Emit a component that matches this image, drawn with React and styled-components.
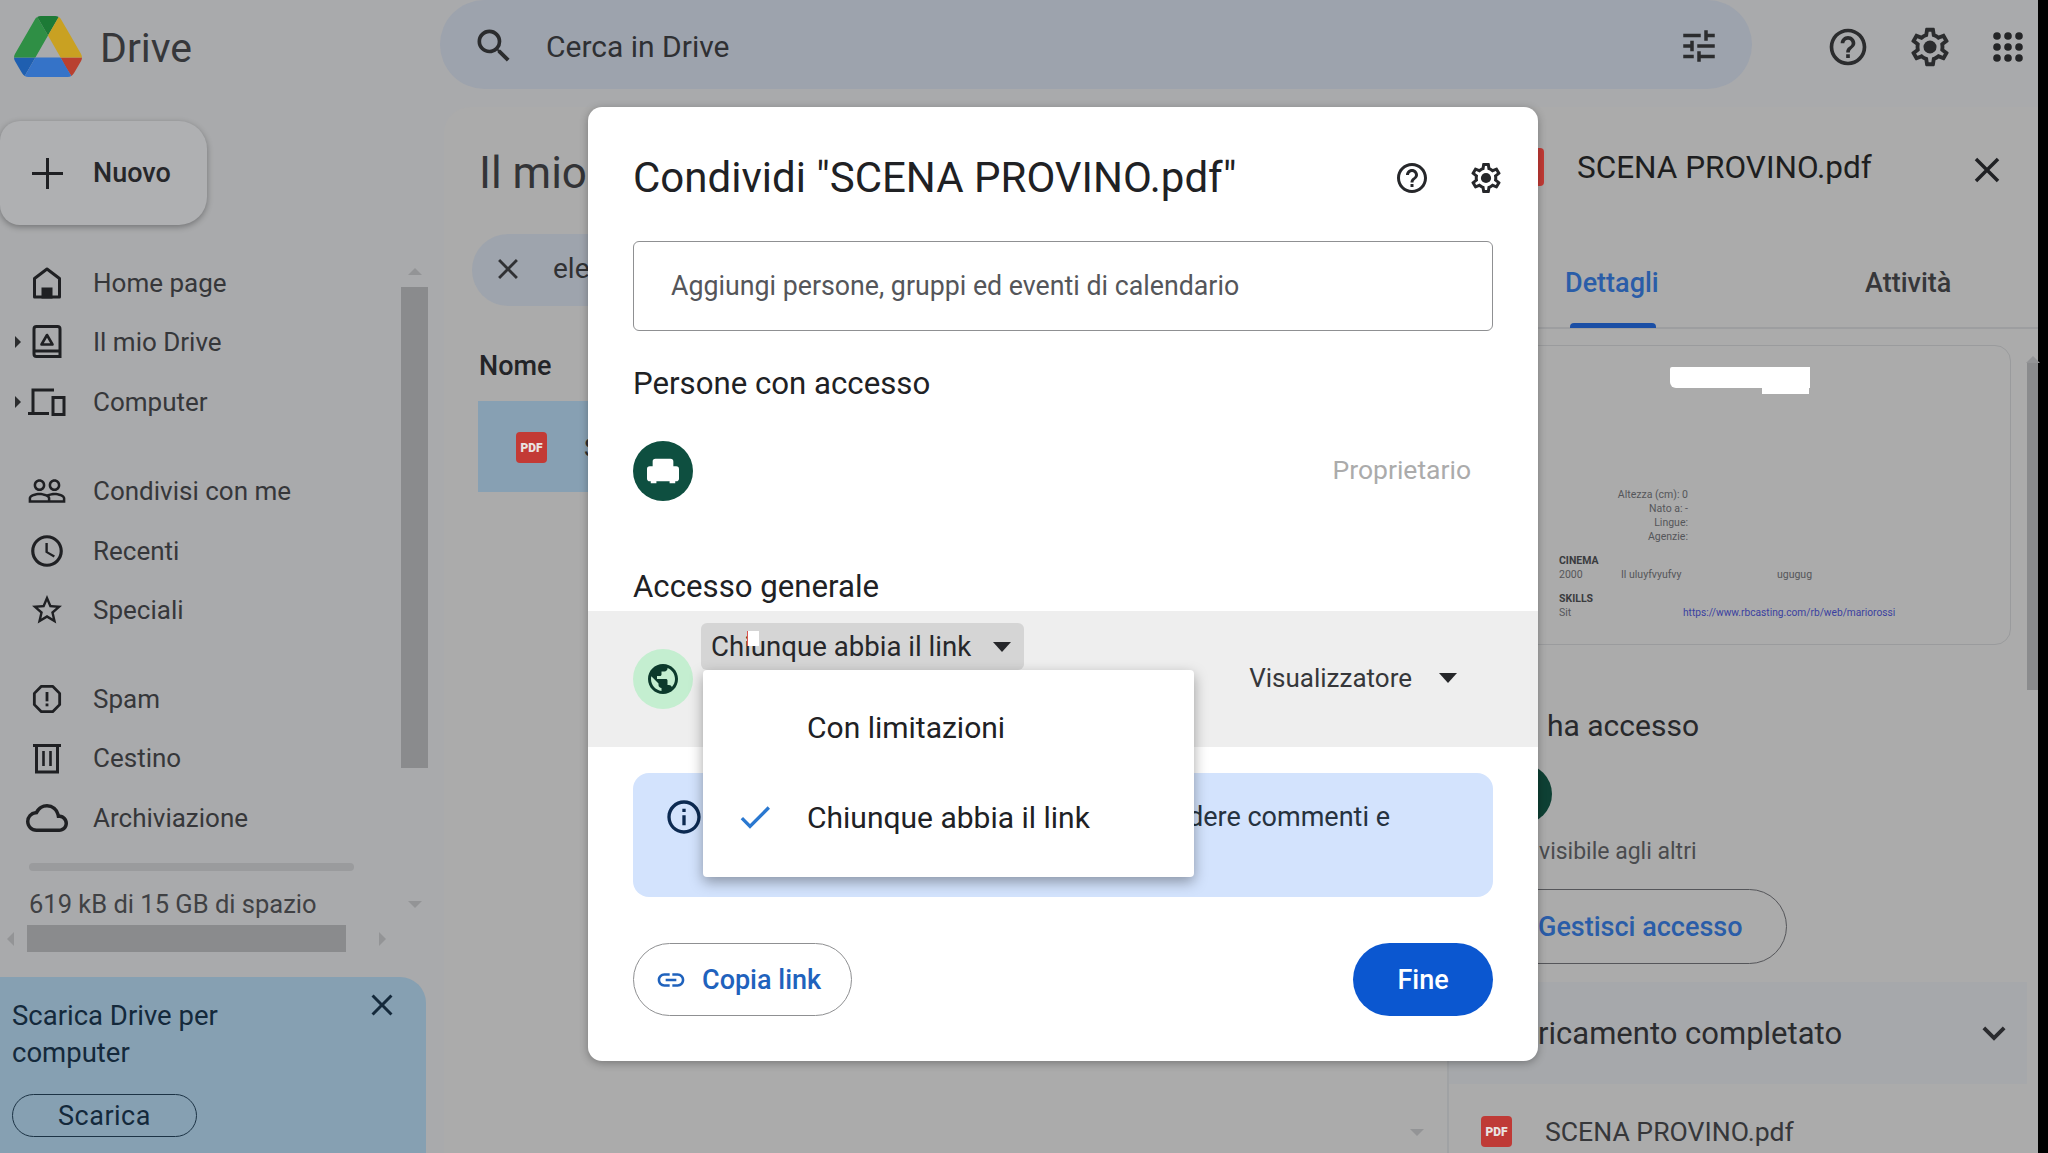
import React from 'react'
import styled, { createGlobalStyle } from 'styled-components'
import {
  MdSearch, MdTune, MdHelpOutline, MdClose, MdPeopleOutline, MdAccessTime, MdStarBorder,
  MdOutlineCloud, MdPublic, MdInfoOutline, MdCheck, MdLink, MdKeyboardArrowDown,
} from 'react-icons/md'

const GlobalStyle = createGlobalStyle`
  html, body { margin: 0; padding: 0; background: #000; }
  body { font-family: Roboto, "Liberation Sans", sans-serif; color: #2b2c2e; }
  * { box-sizing: border-box; }
`

const Page = styled.div`
  position: relative;
  width: 2048px;
  height: 1153px;
  overflow: hidden;
  background: #000;
`
const Shell = styled.div`
  width: 2038px;
  height: 1153px;
  background: #a9aaac;
  display: flex;
  flex-direction: column;
`

/* top bar */
const TopBar = styled.header`
  height: 94px;
  display: flex;
  align-items: flex-start;
`
const Brand = styled.div`
  width: 440px;
  height: 94px;
  padding: 16px 0 0 14px;
  display: flex;
  align-items: flex-start;
  gap: 18px;
`
const BrandName = styled.span`
  font-size: 41px;
  line-height: 60px;
  margin-top: 2px;
  color: #36373a;
`
const SearchBar = styled.div`
  width: 1312px;
  height: 89px;
  border-radius: 45px;
  background: #9da3ad;
  display: flex;
  align-items: center;
  padding: 3px 32px 0 32px;
`
const SearchText = styled.span`
  font-size: 30px;
  color: #2f3033;
  margin-left: 30px;
  flex: 1;
`
const TopActions = styled.div`
  display: flex;
  align-items: center;
  height: 93px;
  margin-left: 73px;
  color: #2b2c2e;
`
const TopIcon = styled.div`
  width: 46px;
  height: 46px;
  display: flex;
  align-items: center;
  justify-content: center;
  margin-left: ${p => p.$gap || 0}px;
`

/* body */
const Body = styled.div`
  flex: 1;
  display: flex;
  min-height: 0;
`
const Sidebar = styled.aside`
  width: 444px;
  display: flex;
  flex-direction: column;
`
const NewButton = styled.div`
  margin-top: 27px;
  flex: none;
  width: 207px;
  height: 104px;
  border-radius: 20px 28px 28px 20px;
  background: #afb0b2;
  box-shadow: 0 2px 6px rgba(0, 0, 0, 0.32);
  display: flex;
  align-items: center;
  padding-left: 31px;
  gap: 29px;
  font-size: 27px;
  font-weight: 500;
  color: #26272a;
`
const NavArea = styled.div`
  margin-top: 28px;
  display: flex;
  height: 672px;
  flex: none;
`
const NavColumn = styled.div`
  width: 401px;
  display: flex;
  flex-direction: column;
`
const NavGroup = styled.div`
  flex: none;
  margin-bottom: ${p => p.$gap || 0}px;
`
const NavItem = styled.div`
  position: relative;
  height: 59.5px;
  display: flex;
  align-items: center;
  font-size: 26px;
  color: #36373a;
`
const NavCaret = styled.span`
  position: absolute;
  left: 15px;
  width: 0;
  height: 0;
  border-top: 6px solid transparent;
  border-bottom: 6px solid transparent;
  border-left: 6px solid #2b2c2e;
`
const NavIconSlot = styled.span`
  width: 48px;
  margin-left: 23px;
  margin-right: 22px;
  height: 40px;
  display: flex;
  align-items: center;
  justify-content: center;
  flex: none;
  color: #1f2023;
`
const StorageBar = styled.div`
  flex: none;
  margin: 15px 0 0 29px;
  width: 325px;
  height: 8px;
  border-radius: 4px;
  background: #9a9b9d;
`
const StorageText = styled.div`
  flex: none;
  margin: 15px 0 0 29px;
  font-size: 25.5px;
  line-height: 36px;
  color: #404144;
  white-space: nowrap;
`
const ScrollColumn = styled.div`
  width: 27px;
  display: flex;
  flex-direction: column;
  align-items: center;
`
const ArrowUp = styled.span`
  width: 0;
  height: 0;
  flex: none;
  border-left: 7px solid transparent;
  border-right: 7px solid transparent;
  border-bottom: 7px solid #939496;
  margin: ${p => p.$margin || 0};
`
const ArrowDown = styled.span`
  width: 0;
  height: 0;
  flex: none;
  border-left: 7px solid transparent;
  border-right: 7px solid transparent;
  border-top: 7px solid #939496;
  margin: ${p => p.$margin || 0};
`
const ScrollThumb = styled.div`
  width: 100%;
  height: ${p => p.$h}px;
  flex: none;
  background: #8a8b8d;
`
const HScrollRow = styled.div`
  height: 27px;
  flex: none;
  display: flex;
  align-items: center;
  padding-left: 7px;
`
const ArrowLeft = styled.span`
  width: 0;
  height: 0;
  border-top: 7px solid transparent;
  border-bottom: 7px solid transparent;
  border-right: 7px solid #939496;
  margin-right: 13px;
`
const ArrowRight = styled.span`
  width: 0;
  height: 0;
  border-top: 7px solid transparent;
  border-bottom: 7px solid transparent;
  border-left: 7px solid #939496;
  margin-left: 33px;
`
const HThumb = styled.div`
  width: 319px;
  height: 27px;
  background: #8a8b8d;
`
const Promo = styled.div`
  position: relative;
  margin-top: 25px;
  width: 426px;
  flex: 1;
  border-top-right-radius: 26px;
  background: #86a0b2;
  padding: 20px 12px 0;
  color: #14293b;
`
const PromoText = styled.div`
  font-size: 27.5px;
  line-height: 37px;
  width: 270px;
`
const PromoClose = styled.span`
  position: absolute;
  right: 26px;
  top: 10px;
  display: flex;
`
const PromoButton = styled.div`
  margin-top: 23px;
  width: 185px;
  height: 43px;
  border: 1.5px solid #1c3345;
  border-radius: 22px;
  display: flex;
  align-items: center;
  justify-content: center;
  font-size: 27px;
  letter-spacing: 0.5px;
`

/* drive content */
const Content = styled.div`
  flex: 1;
  margin-top: 13px;
  display: flex;
  background: #ababab;
  border-top-left-radius: 26px;
`
const Main = styled.main`
  position: relative;
  width: 1003px;
  padding-left: 35px;
`
const MainTitle = styled.h1`
  margin: 36px 0 0;
  font-size: 44px;
  line-height: 60px;
  font-weight: 400;
  color: #333437;
`
const FilterChip = styled.div`
  margin: 31px 0 0 -7px;
  height: 72px;
  border-radius: 36px 0 0 36px;
  background: #9ea4ad;
  display: flex;
  align-items: center;
  padding: 0 0 3px 19px;
  gap: 28px;
  font-size: 28px;
  color: #303134;
`
const ColumnLabel = styled.div`
  margin-top: 42px;
  font-size: 27px;
  line-height: 36px;
  font-weight: 500;
  color: #232427;
`
const FileRow = styled.div`
  margin: 17px 0 0 -1px;
  height: 91px;
  background: #87a0b3;
  display: flex;
  align-items: center;
  padding: 2px 0 0 38px;
  gap: 37px;
  font-size: 26px;
`
const PdfIcon = styled.span`
  width: ${p => p.$size || 31}px;
  height: ${p => p.$size || 31}px;
  flex: none;
  border-radius: 4px;
  background: ${p => p.$bg || '#c33a35'};
  color: #e9e2e1;
  font-size: 12px;
  font-weight: 900;
  display: flex;
  align-items: center;
  justify-content: center;
`
const MainArrow = styled.span`
  position: absolute;
  right: 23px;
  bottom: 17px;
  display: flex;
`

/* details panel */
const Panel = styled.section`
  width: 591px;
  position: relative;
  display: flex;
  flex-direction: column;
  border-left: 2px solid #a0a2a4;
`
const PanelHeader = styled.div`
  height: 120px;
  flex: none;
  display: flex;
  align-items: center;
  padding: 0 30px 0 57px;
  gap: 33px;
  font-size: 31.5px;
  font-weight: 400;
  color: #1d1e20;
`
const PanelClose = styled.span`
  margin: 5px 0 0 auto;
  display: flex;
  color: #202124;
`
const Tabs = styled.div`
  height: 102px;
  flex: none;
  border-bottom: 2px solid #9d9ea0;
  display: grid;
  grid-template-columns: 300px auto;
  padding-left: 116px;
`
const Tab = styled.div`
  position: relative;
  padding-top: 40px;
  font-size: 27px;
  font-weight: 500;
  color: ${p => (p.$active ? '#2a5da8' : '#36373a')};
  white-space: nowrap;
`
const TabLine = styled.span`
  position: absolute;
  left: 5px;
  bottom: -1px;
  width: 86px;
  height: 5px;
  border-radius: 4px 4px 0 0;
  background: #1b4fa5;
`
const PanelBody = styled.div`
  flex: 1;
  display: flex;
  min-height: 0;
`
const PanelMain = styled.div`
  flex: 1;
  min-width: 0;
`
const PanelScroll = styled.div`
  width: 11px;
  display: flex;
  flex-direction: column;
  align-items: center;
  padding-top: 27px;
`
const Preview = styled.div`
  position: relative;
  margin: 16px 0 0 22px;
  width: 540px;
  height: 300px;
  border: 1.5px solid #9a9b9d;
  border-radius: 16px;
  padding: 142px 0 0 87px;
  font-size: 10.5px;
  line-height: 14px;
  color: #55565a;
`
const Redacted = styled.div`
  position: absolute;
  left: 198px;
  top: 21px;
  width: 140px;
  height: 21px;
  background: #fff;
  border-radius: 2px 0 0 6px;
  &::after {
    content: '';
    position: absolute;
    right: 1px;
    top: 21px;
    width: 47px;
    height: 6px;
    background: #fff;
  }
`
const DocBio = styled.div`
  margin-left: 53px;
  width: 76px;
  text-align: right;
  white-space: nowrap;
`
const DocHead = styled.div`
  margin-top: ${p => p.$top || 0}px;
  font-weight: 700;
  color: #3a3b3e;
`
const DocRow = styled.div`
  display: grid;
  grid-template-columns: ${p => p.$cols};
  white-space: nowrap;
`
const DocLink = styled.span`
  color: #3a3fa0;
  font-size: 10.2px;
`
const AccessTitle = styled.div`
  margin: 63px 0 0 98px;
  font-size: 30px;
  line-height: 36px;
  color: #28292c;
`
const OwnerDot = styled.div`
  margin: 20px 0 0 43px;
  width: 60px;
  height: 60px;
  border-radius: 50%;
  background: #0e4034;
`
const AccessNote = styled.div`
  margin: 11px 0 0 90px;
  font-size: 23px;
  line-height: 34px;
  color: #4a4b4e;
`
const ManageButton = styled.div`
  margin: 20px 0 0 0;
  width: 338px;
  height: 75px;
  border: 1.5px solid #55565a;
  border-radius: 38px;
  display: flex;
  align-items: center;
  padding-left: 88px;
  font-size: 27px;
  font-weight: 500;
  color: #2a5da8;
`
const UploadHead = styled.div`
  margin-top: 18px;
  height: 102px;
  background: #a6a8ab;
  display: flex;
  align-items: center;
  justify-content: space-between;
  padding: 0 10px 0 89px;
  font-size: 31px;
  color: #2a2b2e;
`
const UploadRow = styled.div`
  height: 95px;
  display: flex;
  align-items: center;
  padding-left: 32px;
  gap: 33px;
  font-size: 26.6px;
  color: #36373a;
`

/* share dialog */
const Dialog = styled.div`
  position: absolute;
  left: 588px;
  top: 107px;
  width: 950px;
  height: 954px;
  background: #fff;
  border-radius: 14px;
  box-shadow: 0 2px 8px rgba(0, 0, 0, 0.3);
  padding: 0 45px;
  display: flex;
  flex-direction: column;
`
const DialogHeader = styled.div`
  height: 134px;
  flex: none;
  padding-top: 41px;
  display: flex;
  align-items: flex-start;
  justify-content: space-between;
`
const DialogTitle = styled.h2`
  margin: 0;
  font-size: 42px;
  line-height: 60px;
  font-weight: 400;
  color: #202124;
  white-space: nowrap;
`
const HeaderIcons = styled.div`
  display: flex;
  align-items: center;
  gap: 38px;
  height: 60px;
  margin-right: -11px;
  color: #26272a;
`
const PeopleInput = styled.div`
  height: 90px;
  flex: none;
  border: 1.5px solid #8f9092;
  border-radius: 6px;
  padding-left: 37px;
  display: flex;
  align-items: center;
  font-size: 26.75px;
  color: #55565a;
`
const SectionTitle = styled.div`
  margin-top: ${p => p.$top}px;
  flex: none;
  height: 36px;
  padding-top: 1px;
  font-size: 31.2px;
  line-height: 36px;
  color: #202124;
`
const OwnerRow = styled.div`
  margin-top: 40px;
  height: 60px;
  flex: none;
  display: flex;
  align-items: center;
  justify-content: space-between;
  padding-right: 22px;
`
const OwnerRole = styled.span`
  margin-bottom: 3px;
  font-size: 26.5px;
  color: #ababab;
`
const Avatar = styled.div`
  width: 60px;
  height: 60px;
  border-radius: 50%;
  background: ${p => p.$bg};
  color: ${p => p.$fg || '#fff'};
  display: flex;
  align-items: center;
  justify-content: center;
  flex: none;
`
const GeneralRow = styled.div`
  position: relative;
  margin: 7px -45px 0;
  padding: 0 0 0 45px;
  height: 136px;
  flex: none;
  background: #eeeeee;
  display: flex;
  align-items: center;
`
const AccessPicker = styled.div`
  position: relative;
  align-self: flex-start;
  margin: 12px 0 0 8px;
  width: 323px;
  height: 47px;
  border-radius: 6px;
  background: #d5d5d5;
  display: flex;
  align-items: center;
  padding-left: 10px;
  font-size: 27.6px;
  color: #26272a;
`
const TextSmudge = styled.span`
  position: absolute;
  left: 46px;
  top: 8px;
  width: 12px;
  height: 15px;
  background: #fff;
  border-left: 1px solid #d9534f;
`
const Caret = styled.span`
  width: 0;
  height: 0;
  border-left: 9px solid transparent;
  border-right: 9px solid transparent;
  border-top: 10px solid #26272a;
  margin-left: ${p => p.$left}px;
`
const RoleSelect = styled.div`
  margin-left: auto;
  padding: 0 81px 2px 0;
  display: flex;
  align-items: center;
  font-size: 26px;
  color: #36373a;
`
const AccessMenu = styled.div`
  position: absolute;
  left: 115px;
  top: 59px;
  width: 491px;
  height: 207px;
  padding-top: 12px;
  background: #fff;
  border-radius: 4px;
  box-shadow: 0 5px 14px rgba(0, 0, 0, 0.35);
  z-index: 2;
`
const MenuItem = styled.div`
  height: 90px;
  display: flex;
  align-items: center;
  font-size: 30px;
  color: #202124;
`
const MenuCheck = styled.span`
  width: 104px;
  display: flex;
  justify-content: center;
  color: #2a78d0;
`
const InfoBox = styled.div`
  margin-top: 26px;
  height: 124px;
  flex: none;
  border-radius: 16px;
  background: #d3e3fd;
  padding: 22px 103px 0 31px;
  display: flex;
  font-size: 27px;
  line-height: 44px;
  color: #26323f;
  white-space: nowrap;
`
const InfoText = styled.span`
  flex: 1;
  text-align: right;
`
const InfoIcon = styled.span`
  color: #0c2a52;
  display: flex;
  height: 44px;
  align-items: center;
`
const Footer = styled.div`
  margin-top: 46px;
  display: flex;
  justify-content: space-between;
`
const CopyButton = styled.div`
  width: 219px;
  height: 73px;
  border: 1.5px solid #8f9092;
  border-radius: 37px;
  padding-left: 21px;
  display: flex;
  align-items: center;
  gap: 15px;
  font-size: 27px;
  font-weight: 500;
  color: #1f62bd;
`
const DoneButton = styled.div`
  width: 140px;
  height: 73px;
  border-radius: 37px;
  background: #0b57d0;
  color: #fff;
  display: flex;
  align-items: center;
  justify-content: center;
  font-size: 27px;
  font-weight: 500;
`

function DriveLogo() {
  return (
    <svg width="68" height="61" viewBox="0 0 87.3 78">
      <path d="m6.6 66.85 3.85 6.65c.8 1.4 1.95 2.5 3.3 3.3l13.75-23.8h-27.5c0 1.55.4 3.1 1.2 4.5z" fill="#1f5fb0" />
      <path d="m43.65 25-13.75-23.8c-1.35.8-2.5 1.9-3.3 3.3l-25.4 44a9.06 9.06 0 0 0 -1.2 4.5h27.5z" fill="#2f8f45" />
      <path d="m73.55 76.8c1.35-.8 2.5-1.9 3.3-3.3l1.6-2.75 7.65-13.25c.8-1.4 1.2-2.95 1.2-4.5h-27.502l5.852 11.5z" fill="#b9402f" />
      <path d="m43.65 25 13.75-23.8c-1.35-.8-2.9-1.2-4.5-1.2h-18.5c-1.6 0-3.15.45-4.5 1.2z" fill="#1d7a36" />
      <path d="m59.8 53h-32.3l-13.75 23.8c1.35.8 2.9 1.2 4.5 1.2h50.8c1.6 0 3.15-.45 4.5-1.2z" fill="#3573c8" />
      <path d="m73.4 26.5-12.7-22c-.8-1.4-1.95-2.5-3.3-3.3l-13.75 23.8 16.15 28h27.45c0-1.55-.4-3.1-1.2-4.5z" fill="#c9a122" />
    </svg>
  )
}

function GearIcon({ size }) {
  return (
    <svg width={size} height={size} viewBox="0 0 24 24" fill="currentColor">
      <path d="M19.43 12.98c.04-.32.07-.64.07-.98 0-.34-.03-.66-.07-.98l2.11-1.65c.19-.15.24-.42.12-.64l-2-3.46c-.09-.16-.26-.25-.44-.25-.06 0-.12.01-.17.03l-2.49 1c-.52-.4-1.08-.73-1.69-.98l-.38-2.65C14.46 2.18 14.25 2 14 2h-4c-.25 0-.46.18-.49.42l-.38 2.65c-.61.25-1.17.59-1.69.98l-2.49-1c-.06-.02-.12-.03-.18-.03-.17 0-.34.09-.43.25l-2 3.46c-.13.22-.07.49.12.64l2.11 1.65c-.04.32-.07.65-.07.98 0 .33.03.66.07.98l-2.11 1.65c-.19.15-.24.42-.12.64l2 3.46c.09.16.26.25.44.25.06 0 .12-.01.17-.03l2.49-1c.52.4 1.08.73 1.69.98l.38 2.65c.03.24.24.42.49.42h4c.25 0 .46-.18.49-.42l.38-2.65c.61-.25 1.17-.59 1.69-.98l2.49 1c.06.02.12.03.18.03.17 0 .34-.09.43-.25l2-3.46c.12-.22.07-.49-.12-.64l-2.11-1.65zm-1.98-1.71c.04.31.05.52.05.73 0 .21-.02.43-.05.73l-.14 1.13.89.7 1.08.84-.7 1.21-1.27-.51-1.04-.42-.9.68c-.43.32-.84.56-1.25.73l-1.06.43-.16 1.13-.2 1.35h-1.4l-.19-1.35-.16-1.13-1.06-.43c-.43-.18-.83-.41-1.23-.71l-.91-.7-1.06.43-1.27.51-.7-1.21 1.08-.84.89-.7-.14-1.13c-.03-.31-.05-.54-.05-.74s.02-.43.05-.73l.14-1.13-.89-.7-1.08-.84.7-1.21 1.27.51 1.04.42.9-.68c.43-.32.84-.56 1.25-.73l1.06-.43.16-1.13.2-1.35h1.39l.19 1.35.16 1.13 1.06.43c.43.18.83.41 1.23.71l.91.7 1.06-.43 1.27-.51.7 1.21-1.07.85-.89.7.14 1.13z" />
      <circle cx="12" cy="12" r="3.4" />
    </svg>
  )
}

function PlusIcon() {
  return (
    <svg width="33" height="33" viewBox="0 0 33 33" fill="none" stroke="#1f2023" strokeWidth="3">
      <path d="M16.5 1v31M1 16.5h31" />
    </svg>
  )
}

function GridDots() {
  return (
    <svg width="30" height="30" viewBox="0 0 30 30" fill="#242527">
      {[4, 15, 26].map(y => [4, 15, 26].map(x => <circle key={`${x}-${y}`} cx={x} cy={y} r="3.8" />))}
    </svg>
  )
}

function HomeIcon() {
  return (
    <svg width="30" height="32" viewBox="0 0 30 32" fill="none" stroke="currentColor" strokeWidth="3">
      <path d="M2.500 30V11.500L15 2l12.500 9.500V30z" strokeLinejoin="round" />
      <path d="M11 30v-8h8v8z" fill="currentColor" />
    </svg>
  )
}

function MyDriveIcon() {
  return (
    <svg width="30" height="34" viewBox="0 0 30 34" fill="none" stroke="currentColor" strokeWidth="3">
      <path d="M2 4c0-1.500 1-2.500 2.500-2.500h21c1.500 0 2.500 1 2.500 2.500v27.500H4.500C3 31.500 2 30.500 2 29z" />
      <path d="M2 26h26" />
      <path d="M15 10l5.500 9.500h-11z" strokeWidth="2.600" strokeLinejoin="round" />
    </svg>
  )
}

function ComputerIcon() {
  return (
    <svg width="38" height="28" viewBox="0 0 38 28" fill="none" stroke="currentColor" strokeWidth="3">
      <path d="M5 24V2h21" />
      <path d="M0 25.500h21" />
      <path d="M25 9.500h11V26.500H25z" />
    </svg>
  )
}

function TrashIcon() {
  return (
    <svg width="28" height="32" viewBox="0 0 28 32" fill="none" stroke="currentColor" strokeWidth="3">
      <path d="M0 3.500h28" />
      <path d="M3.500 3v27h21V3" />
      <path d="M10.500 9v15M17.500 9v15" strokeWidth="2.600" />
    </svg>
  )
}

function SpamIcon() {
  return (
    <svg width="30" height="30" viewBox="0 0 32 32" fill="none" stroke="currentColor" strokeWidth="3">
      <path d="M10 2.500h12L29.500 10v12L22 29.500H10L2.500 22V10z" strokeLinejoin="round" />
      <path d="M16 8.500v10" />
      <path d="M16 20.800v3" />
    </svg>
  )
}

function OwnerGlyph() {
  return (
    <svg width="32" height="30" viewBox="0 0 34 30" fill="#fff">
      <path d="M9 2h16c2 0 3 1 3 3v5h3c2 0 3 1 3 3v10c0 2-1 3-3 3h-1v2h-6v-2H10v2H4v-2H3c-2 0-3-1-3-3V13c0-2 1-3 3-3h3V5c0-2 1-3 3-3z" />
    </svg>
  )
}

const mainNav = [
  { label: 'Home page', icon: <HomeIcon /> },
  { label: 'Il mio Drive', icon: <MyDriveIcon />, caret: true },
  { label: 'Computer', icon: <ComputerIcon />, caret: true },
]
const sharedNav = [
  { label: 'Condivisi con me', icon: <MdPeopleOutline size={40} /> },
  { label: 'Recenti', icon: <MdAccessTime size={38} /> },
  { label: 'Speciali', icon: <MdStarBorder size={36} /> },
]
const otherNav = [
  { label: 'Spam', icon: <SpamIcon /> },
  { label: 'Cestino', icon: <TrashIcon /> },
  { label: 'Archiviazione', icon: <MdOutlineCloud size={42} /> },
]

function NavList({ items, gap }) {
  return (
    <NavGroup $gap={gap}>
      {items.map(item => (
        <NavItem key={item.label}>
          {item.caret && <NavCaret />}
          <NavIconSlot>{item.icon}</NavIconSlot>
          {item.label}
        </NavItem>
      ))}
    </NavGroup>
  )
}

function ShareDialog() {
  return (
    <Dialog>
      <DialogHeader>
        <DialogTitle>Condividi "SCENA PROVINO.pdf"</DialogTitle>
        <HeaderIcons>
          <MdHelpOutline size={36} />
          <GearIcon size={36} />
        </HeaderIcons>
      </DialogHeader>
      <PeopleInput>Aggiungi persone, gruppi ed eventi di calendario</PeopleInput>
      <SectionTitle $top={34}>Persone con accesso</SectionTitle>
      <OwnerRow>
        <Avatar $bg="#0e4f40"><OwnerGlyph /></Avatar>
        <OwnerRole>Proprietario</OwnerRole>
      </OwnerRow>
      <SectionTitle $top={67}>Accesso generale</SectionTitle>
      <GeneralRow>
        <Avatar $bg="#c4eed0" $fg="#0c3a2c"><MdPublic size={36} /></Avatar>
        <AccessPicker>
          Chiunque abbia il link
          <Caret $left={22} />
          <TextSmudge />
        </AccessPicker>
        <RoleSelect>
          Visualizzatore
          <Caret $left={27} />
        </RoleSelect>
        <AccessMenu>
          <MenuItem><MenuCheck />Con limitazioni</MenuItem>
          <MenuItem><MenuCheck><MdCheck size={40} /></MenuCheck>Chiunque abbia il link</MenuItem>
        </AccessMenu>
      </GeneralRow>
      <InfoBox>
        <InfoIcon><MdInfoOutline size={40} /></InfoIcon>
        <InfoText>dere commenti e</InfoText>
      </InfoBox>
      <Footer>
        <CopyButton><MdLink size={32} />Copia link</CopyButton>
        <DoneButton>Fine</DoneButton>
      </Footer>
    </Dialog>
  )
}

export default function App() {
  return (
    <Page>
      <GlobalStyle />
      <Shell>
        <TopBar>
          <Brand>
            <DriveLogo />
            <BrandName>Drive</BrandName>
          </Brand>
          <SearchBar>
            <MdSearch size={44} color="#2b2c2e" />
            <SearchText>Cerca in Drive</SearchText>
            <MdTune size={42} color="#2b2c2e" />
          </SearchBar>
          <TopActions>
            <TopIcon><MdHelpOutline size={44} /></TopIcon>
            <TopIcon $gap={36}><GearIcon size={46} /></TopIcon>
            <TopIcon $gap={32}><GridDots /></TopIcon>
          </TopActions>
        </TopBar>
        <Body>
          <Sidebar>
            <NewButton><PlusIcon />Nuovo</NewButton>
            <NavArea>
              <NavColumn>
                <NavList items={mainNav} gap={30} />
                <NavList items={sharedNav} gap={29} />
                <NavList items={otherNav} />
                <StorageBar />
                <StorageText>619 kB di 15 GB di spazio</StorageText>
              </NavColumn>
              <ScrollColumn>
                <ArrowUp $margin="15px 0 12px" />
                <ScrollThumb $h={481} />
                <ArrowDown $margin="133px 0 0" />
              </ScrollColumn>
            </NavArea>
            <HScrollRow>
              <ArrowLeft />
              <HThumb />
              <ArrowRight />
            </HScrollRow>
            <Promo>
              <PromoText>Scarica Drive per computer</PromoText>
              <PromoClose><MdClose size={36} /></PromoClose>
              <PromoButton>Scarica</PromoButton>
            </Promo>
          </Sidebar>
          <Content>
            <Main>
              <MainTitle>Il mio</MainTitle>
              <FilterChip><MdClose size={34} />ele</FilterChip>
              <ColumnLabel>Nome</ColumnLabel>
              <FileRow><PdfIcon>PDF</PdfIcon>S</FileRow>
              <MainArrow><ArrowDown /></MainArrow>
            </Main>
            <Panel>
              <PanelHeader>
                <PdfIcon $size={38} />
                SCENA PROVINO.pdf
                <PanelClose><MdClose size={42} /></PanelClose>
              </PanelHeader>
              <Tabs>
                <Tab $active>Dettagli<TabLine /></Tab>
                <Tab>Attività</Tab>
              </Tabs>
              <PanelBody>
                <PanelMain>
                  <Preview>
                    <Redacted />
                    <DocBio>
                      <div>Altezza (cm): 0</div>
                      <div>Nato a: -</div>
                      <div>Lingue:</div>
                      <div>Agenzie:</div>
                    </DocBio>
                    <DocHead $top={10}>CINEMA</DocHead>
                    <DocRow $cols="62px 156px auto">
                      <span>2000</span><span>Il uluyfvyufvy</span><span>ugugug</span>
                    </DocRow>
                    <DocHead $top={10}>SKILLS</DocHead>
                    <DocRow $cols="124px auto">
                      <span>Sit</span><DocLink>https://www.rbcasting.com/rb/web/mariorossi</DocLink>
                    </DocRow>
                  </Preview>
                  <AccessTitle>ha accesso</AccessTitle>
                  <OwnerDot />
                  <AccessNote>visibile agli altri</AccessNote>
                  <ManageButton>Gestisci accesso</ManageButton>
                  <UploadHead>
                    ricamento completato
                    <MdKeyboardArrowDown size={46} />
                  </UploadHead>
                  <UploadRow><PdfIcon $bg="#bf3a36">PDF</PdfIcon>SCENA PROVINO.pdf</UploadRow>
                </PanelMain>
                <PanelScroll>
                  <ArrowUp />
                  <ScrollThumb $h={327} />
                </PanelScroll>
              </PanelBody>
            </Panel>
          </Content>
        </Body>
      </Shell>
      <ShareDialog />
    </Page>
  )
}
